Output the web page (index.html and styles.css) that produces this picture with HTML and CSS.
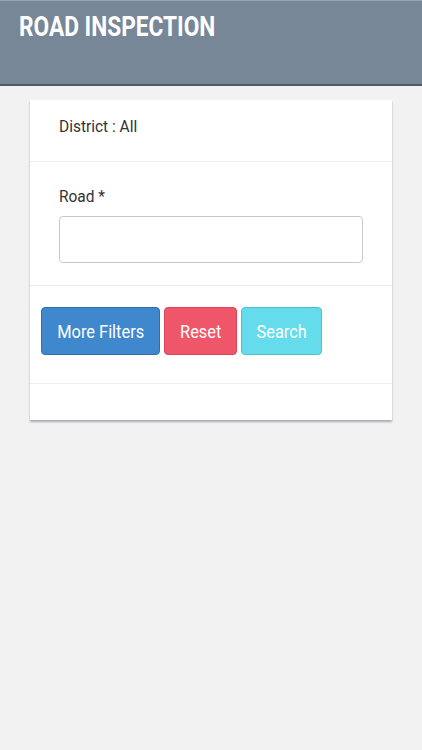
FILE: index.html
```html
<!DOCTYPE html>
<html>
<head>
<meta charset="utf-8">
<link rel="stylesheet" href="styles.css">
</head>
<body>
<header class="topbar">
  <h1 class="title"><span class="narrow-title">ROAD INSPECTION</span></h1>
</header>
<main class="content">
  <section class="card">
    <div class="row district"><span class="narrow">District : All</span></div>
    <div class="row road">
      <label class="label"><span class="narrow">Road *</span></label>
      <input class="input" type="text">
    </div>
    <div class="row actions">
      <button class="btn btn-blue"><span class="narrow-c">More Filters</span></button>
      <button class="btn btn-red"><span class="narrow-c">Reset</span></button>
      <button class="btn btn-cyan"><span class="narrow-c">Search</span></button>
    </div>
    <div class="row footer"></div>
  </section>
</main>
</body>
</html>
```
FILE: styles.css
```css
html, body {
  margin: 0;
  padding: 0;
}
body {
  background: #f2f2f2;
  font-family: Roboto, "Noto Sans", sans-serif;
  color: #333;
  width: 422px;
  height: 750px;
}
.narrow,
.narrow-title,
.narrow-c {
  display: inline-block;
  white-space: nowrap;
}
.narrow {
  transform: scaleX(0.91);
  transform-origin: left center;
}
.narrow-c {
  transform: scaleX(0.91);
  transform-origin: center center;
}
.narrow-title {
  transform: scaleX(0.84);
  transform-origin: left center;
}
.topbar {
  background: #778797;
  border-top: 1px solid #98a5b2;
  border-bottom: 2px solid #4f5963;
  box-sizing: border-box;
  height: 86px;
  padding: 9px 0 0 19px;
}
.title {
  margin: 0;
  color: #fff;
  font-size: 27px;
  font-weight: bold;
  line-height: 34px;
}
.content {
  padding: 14px 30px 0 30px;
}
.card {
  background: #fff;
  box-shadow: 0 2px 2px rgba(80, 90, 110, 0.45);
  display: flex;
  flex-direction: column;
}
.row {
  border-bottom: 1px solid #eeeeee;
}
.district {
  height: 62px;
  padding: 16px 0 0 29px;
  box-sizing: border-box;
  font-size: 17px;
  line-height: 20px;
  color: #333;
}
.road {
  height: 124px;
  box-sizing: border-box;
  padding: 24px 29px 0 29px;
  display: flex;
  flex-direction: column;
}
.label {
  font-size: 17px;
  line-height: 20px;
  color: #333;
  margin-bottom: 10px;
}
.input {
  height: 47px;
  box-sizing: border-box;
  border: 1px solid #c8c8c8;
  border-radius: 4px;
  width: 304px;
  margin: 0;
}
.actions {
  height: 98px;
  box-sizing: border-box;
  padding: 21px 0 0 11px;
  display: flex;
  align-items: flex-start;
  gap: 4px;
}
.btn {
  height: 48px;
  border-radius: 4px;
  font-family: Roboto, "Noto Sans", sans-serif;
  font-size: 18px;
  color: #fff;
  padding: 0;
  cursor: pointer;
}
.btn-blue {
  background: #3f88cd;
  border: 1px solid #3370a8;
  width: 119px;
}
.btn-red {
  background: #f0566a;
  border: 1px solid #d94458;
  width: 73px;
}
.btn-cyan {
  background: #64dceb;
  border: 1px solid #4fc2d0;
  width: 81px;
}
.footer {
  height: 36px;
  border-bottom: none;
}
```
